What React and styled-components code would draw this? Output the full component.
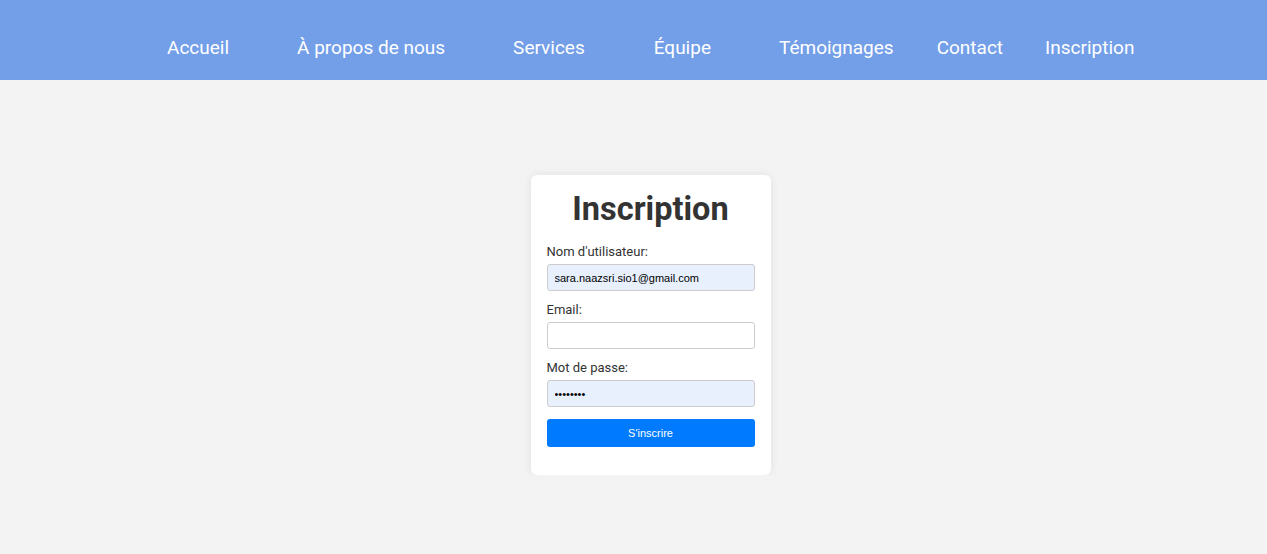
import styled, { createGlobalStyle } from "styled-components";

const GlobalStyle = createGlobalStyle`
    body {
        margin: 0;
        background: #f3f3f3;
        font-family: Roboto, "Liberation Sans", sans-serif;
    }
`;

const links = [
    { label: "Accueil", space: 68 },
    { label: "À propos de nous", space: 68 },
    { label: "Services", space: 69 },
    { label: "Équipe", space: 68 },
    { label: "Témoignages", space: 43 },
    { label: "Contact", space: 42 },
    { label: "Inscription", space: 0 },
];

const App = () => {
    return (
        <>
            <GlobalStyle />
            <Header>
                <NavList>
                    {links.map((l) => (
                        <NavItem key={l.label} $space={l.space}>
                            <NavLink href="#">{l.label}</NavLink>
                        </NavItem>
                    ))}
                </NavList>
            </Header>
            <Main>
                <Card>
                    <Title>Inscription</Title>
                    <form onSubmit={(e) => e.preventDefault()}>
                        <Label htmlFor="username">Nom d'utilisateur:</Label>
                        <Input $filled id="username" type="text" defaultValue="sara.naazsri.sio1@gmail.com" />
                        <Label htmlFor="email">Email:</Label>
                        <Input id="email" type="email" />
                        <Label htmlFor="password">Mot de passe:</Label>
                        <Input $filled id="password" type="password" defaultValue="password" />
                        <Button type="submit">S'inscrire</Button>
                    </form>
                </Card>
            </Main>
        </>
    );
};
export default App;

const Header = styled.header`
    height: 80px;
    box-sizing: border-box;
    padding-top: 37px;
    background-color: #739ee8;
`;

const NavList = styled.ul`
    list-style: none;
    margin: 0;
    padding: 0 0 0 167px;
    display: flex;
    align-items: center;
`;

const NavItem = styled.li`
    margin-right: ${(p) => p.$space}px;
    line-height: 22px;
`;

const NavLink = styled.a`
    color: #ffffff;
    text-decoration: none;
    font-size: 19px;
`;

const Main = styled.main`
    display: flex;
    justify-content: center;
    padding-top: 95px;
    padding-left: 34px;
`;

const Card = styled.div`
    width: 240px;
    height: 300px;
    box-sizing: border-box;
    padding: 14px 16px 16px;
    background: #ffffff;
    border-radius: 6px;
    box-shadow: 0 0 8px rgba(0, 0, 0, 0.08);
`;

const Title = styled.h2`
    margin: 0 0 15px;
    text-align: center;
    font-size: 32.5px;
    font-weight: 700;
    color: #333333;
    line-height: 40px;
`;

const Label = styled.label`
    display: block;
    font-size: 13px;
    line-height: 16px;
    color: #333333;
    margin-bottom: 4px;
`;

const Input = styled.input`
    display: block;
    width: 100%;
    height: 27px;
    box-sizing: border-box;
    margin: 0 0 11px;
    padding: 0 7px;
    border: 1px solid #cccccc;
    border-radius: 3px;
    background: ${(p) => (p.$filled ? "#e8f0fe" : "#ffffff")};
    font-family: "Liberation Sans", Arial, sans-serif;
    font-size: 11px;
    color: #000000;
`;

const Button = styled.button`
    display: block;
    width: 100%;
    height: 28px;
    margin-top: 12px;
    border: none;
    border-radius: 3px;
    background: #007bff;
    color: #ffffff;
    font-family: "Liberation Sans", Arial, sans-serif;
    font-size: 11px;
    cursor: pointer;
`;
